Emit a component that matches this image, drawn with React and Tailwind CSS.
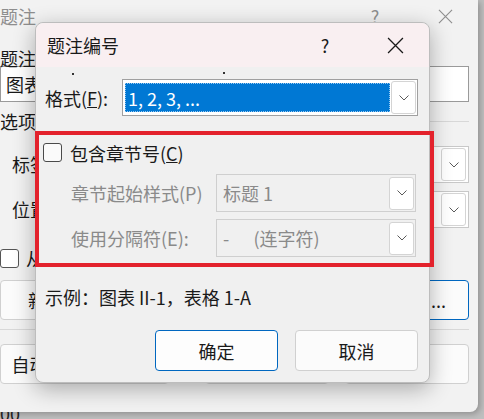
import React from 'react';

const font = { fontFamily: '"Microsoft YaHei UI", "Noto Sans CJK SC", "Noto Sans", sans-serif' };

const Chevron = ({ className = '' }) => (
  <svg width="12" height="8" viewBox="0 0 12 8" className={className}>
    <path d="M1.5 1.5 L6 6 L10.5 1.5" fill="none" stroke="#5a5a5a" strokeWidth="1" />
  </svg>
);

const DropButton = ({ h = 'h-[33px]' }) => (
  <div className={`w-[25px] ${h} bg-white border border-[#d4d4d4] rounded-[3px] flex items-center justify-center`}>
    <Chevron />
  </div>
);

const CloseIcon = ({ color = '#1a1a1a', size = 17 }) => (
  <svg width={size} height={size} viewBox="0 0 16 16">
    <path d="M1 1 L15 15 M15 1 L1 15" stroke={color} strokeWidth="1.2" fill="none" />
  </svg>
);

// the caption dialog lying behind
const BackWindow = () => (
  <div className="absolute -left-[12px] top-0 w-[490px] h-[412px] bg-[#f2f2f2] rounded-br-[8px] shadow-[2px_2px_6px_rgba(0,0,0,0.25)] text-[18px] text-[#1a1a1a]">
    <div className="h-[32px] flex items-center pl-[12px] text-[#8e8e8e]">
      <span className="leading-none">题注</span>
      <span className="ml-auto w-[30px] text-center mr-[40px] leading-none">?</span>
      <div className="w-[30px] flex justify-center mr-[18px]"><CloseIcon color="#8e8e8e" size={15} /></div>
    </div>
    <div className="pl-[12px] pr-[9px]">
      <div className="h-[30px] pt-[14px] leading-[24px]">题注(C):</div>
      <div className="mt-[4px] h-[36px] border border-[#9a9a9a] bg-white flex items-center pl-[5px] leading-none">图表 1</div>
      <div className="mt-[7px] flex items-center gap-2 h-[24px] leading-[24px]">
        <span>选项</span>
        <div className="flex-1 h-px bg-[#d8d8d8]" />
      </div>
      <div className="mt-[13px] flex items-center h-[37px]">
        <span className="pl-[12px] w-[140px]">标签(L):</span>
        <div className="flex-1 h-full border border-[#c8c8c8] bg-white flex items-center justify-end pr-[2px]"><DropButton h="h-[33px]" /></div>
      </div>
      <div className="mt-[8px] flex items-center h-[37px]">
        <span className="pl-[12px] w-[140px]">位置(P):</span>
        <div className="flex-1 h-full border border-[#c8c8c8] bg-white flex items-center justify-end pr-[2px]"><DropButton h="h-[33px]" /></div>
      </div>
      <div className="mt-[20px] flex items-center gap-[7px] h-[20px]">
        <div className="w-[19px] h-[19px] border border-[#555] rounded-[3px] bg-white" />
        <span className="leading-none">从题注中排除标签(E)</span>
      </div>
      <div className="mt-[12px] flex gap-[12px] h-[40px]">
        <div className="w-[150px] border border-[#d0d0d0] rounded-[4px] bg-[#fbfbfb] flex items-center pl-[27px]">新建标签(N)...</div>
        <div className="w-[150px] border border-[#d0d0d0] rounded-[4px] bg-[#fbfbfb] flex items-center justify-center">删除标签(D)</div>
        <div className="flex-1 border border-[#0067c0] rounded-[4px] bg-[#fbfbfb] flex items-center justify-end pr-[22px]">编号(U)...</div>
      </div>
      <div className="mt-[9px] h-px bg-[#d8d8d8]" />
      <div className="mt-[14px] flex h-[40px]">
        <div className="w-[169px] border border-[#d0d0d0] rounded-[4px] bg-[#fbfbfb] flex items-center justify-center">自动插入题注(A)...</div>
        <div className="ml-[36px] w-[124px] border border-[#d0d0d0] rounded-[4px] bg-[#fbfbfb] flex items-center justify-center">确定</div>
        <div className="ml-[16px] w-[124px] border border-[#d0d0d0] rounded-[4px] bg-[#fbfbfb] flex items-center justify-center">关闭</div>
      </div>
    </div>
  </div>
);

const Select = ({ children, disabled }) => (
  <div className={`w-[200px] h-[38px] border ${disabled ? 'border-[#cfcfcf] bg-[#f0f0f0] text-[#8a8a8a]' : 'border-[#9a9a9a] bg-white'} flex items-center pl-[6px] pr-[1px]`}>
    <span className="flex-1 leading-none whitespace-pre">{children}</span>
    <DropButton />
  </div>
);

// the numbering dialog in front
const NumberingDialog = () => (
  <div className="absolute left-[35px] top-[22px] w-[395px] h-[361px] bg-[#f0f0f0] rounded-[8px] border border-[#bdbdbd] shadow-[0_6px_22px_rgba(0,0,0,0.3)] text-[18px] text-[#1a1a1a]">
    <div className="h-[44px] bg-[#f9eff1] rounded-t-[8px] flex items-center pl-[11px]">
      <span className="leading-none">题注编号</span>
      <span className="ml-auto w-[46px] text-center leading-none">?</span>
      <div className="ml-[24px] w-[46px] flex justify-center mr-[11px]"><CloseIcon /></div>
    </div>
    <div className="h-[12px] relative">
      <span className="absolute left-[36px] top-[6px] w-[2px] h-[2px] bg-[#333]" />
      <span className="absolute left-[187px] top-[5px] w-[2px] h-[2px] bg-[#333]" />
    </div>
    <div className="flex items-center h-[37px] pl-[9px]">
      <span className="w-[77px] leading-none">
        格式(<span className="underline">F</span>):
      </span>
      <div className="w-[296px] h-full border border-[#a0a0a0] bg-white flex items-center pl-[2px] pr-[1px]">
        <div className="flex-1 h-[29px] bg-[#0078d4] border border-dotted border-[#9ccaf0] text-white flex items-center pl-[2px] leading-none">1, 2, 3, ...</div>
        <div className="ml-[1px]"><DropButton /></div>
      </div>
    </div>
    <div className="mt-[15px] -ml-[1px] w-[399px] h-[136px] border-[4px] border-[#e3222c] pt-[8px] pl-[4px]">
      <div className="flex items-center gap-[8px] h-[19px]">
        <div className="w-[19px] h-[19px] border border-[#4a4a4a] rounded-[3px] bg-[#fafafa]" />
        <span className="leading-none">包含章节号(<span className="underline">C</span>)</span>
      </div>
      <div className="mt-[12px] flex items-center pl-[28px]">
        <span className="w-[145px] text-[#8a8a8a] leading-none">章节起始样式(P)</span>
        <Select disabled>标题 1</Select>
      </div>
      <div className="mt-[7px] flex items-center pl-[28px]">
        <span className="w-[145px] text-[#8a8a8a] leading-none">使用分隔符(E):</span>
        <Select disabled>{'-      (连字符)'}</Select>
      </div>
    </div>
    <div className="mt-[18px] pl-[9px] h-[24px] leading-[24px]">示例：图表 II-1，表格 1-A</div>
    <div className="mt-[21px] flex justify-end gap-[17px] pr-[11px]">
      <button className="w-[123px] h-[41px] bg-[#fdfdfd] border border-[#0067c0] rounded-[4px] leading-none">确定</button>
      <button className="w-[123px] h-[41px] bg-[#fbfbfb] border border-[#d0d0d0] rounded-[4px] leading-none">取消</button>
    </div>
  </div>
);

export default function App() {
  return (
    <div style={font} className="relative w-[484px] h-[419px] overflow-hidden bg-[#bfbfbf]">
      <div className="absolute left-0 top-[404px] text-[18px] text-[#222] leading-none">00</div>
      <BackWindow />
      <NumberingDialog />
    </div>
  );
}
